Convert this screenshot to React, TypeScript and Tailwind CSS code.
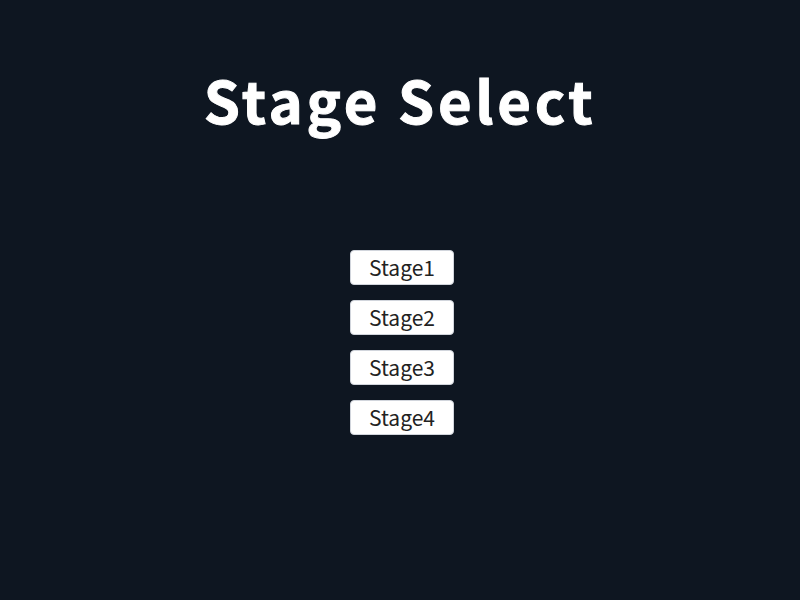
import React from 'react';

const stages = ['Stage1', 'Stage2', 'Stage3', 'Stage4'];

const App = () => {
  return (
    <div
      className="w-[800px] h-[600px] bg-[#0e1621] flex flex-col items-center"
      style={{ fontFamily: '"Noto Sans CJK JP", "Noto Sans", sans-serif' }}
    >
      <h1 className="mt-[61px] text-[58px] leading-[76px] font-bold tracking-[3.7px] text-white [-webkit-text-stroke:1px_white]">
        Stage Select
      </h1>
      <div className="mt-[113px] pl-[4px] flex flex-col gap-[15px]">
        {stages.map((s) => (
          <button
            key={s}
            className="w-[104px] h-[35px] bg-white rounded-[4px] border border-gray-300 text-[21px] text-[#222] flex items-center justify-center"
          >
            {s}
          </button>
        ))}
      </div>
    </div>
  );
};

export default App;
